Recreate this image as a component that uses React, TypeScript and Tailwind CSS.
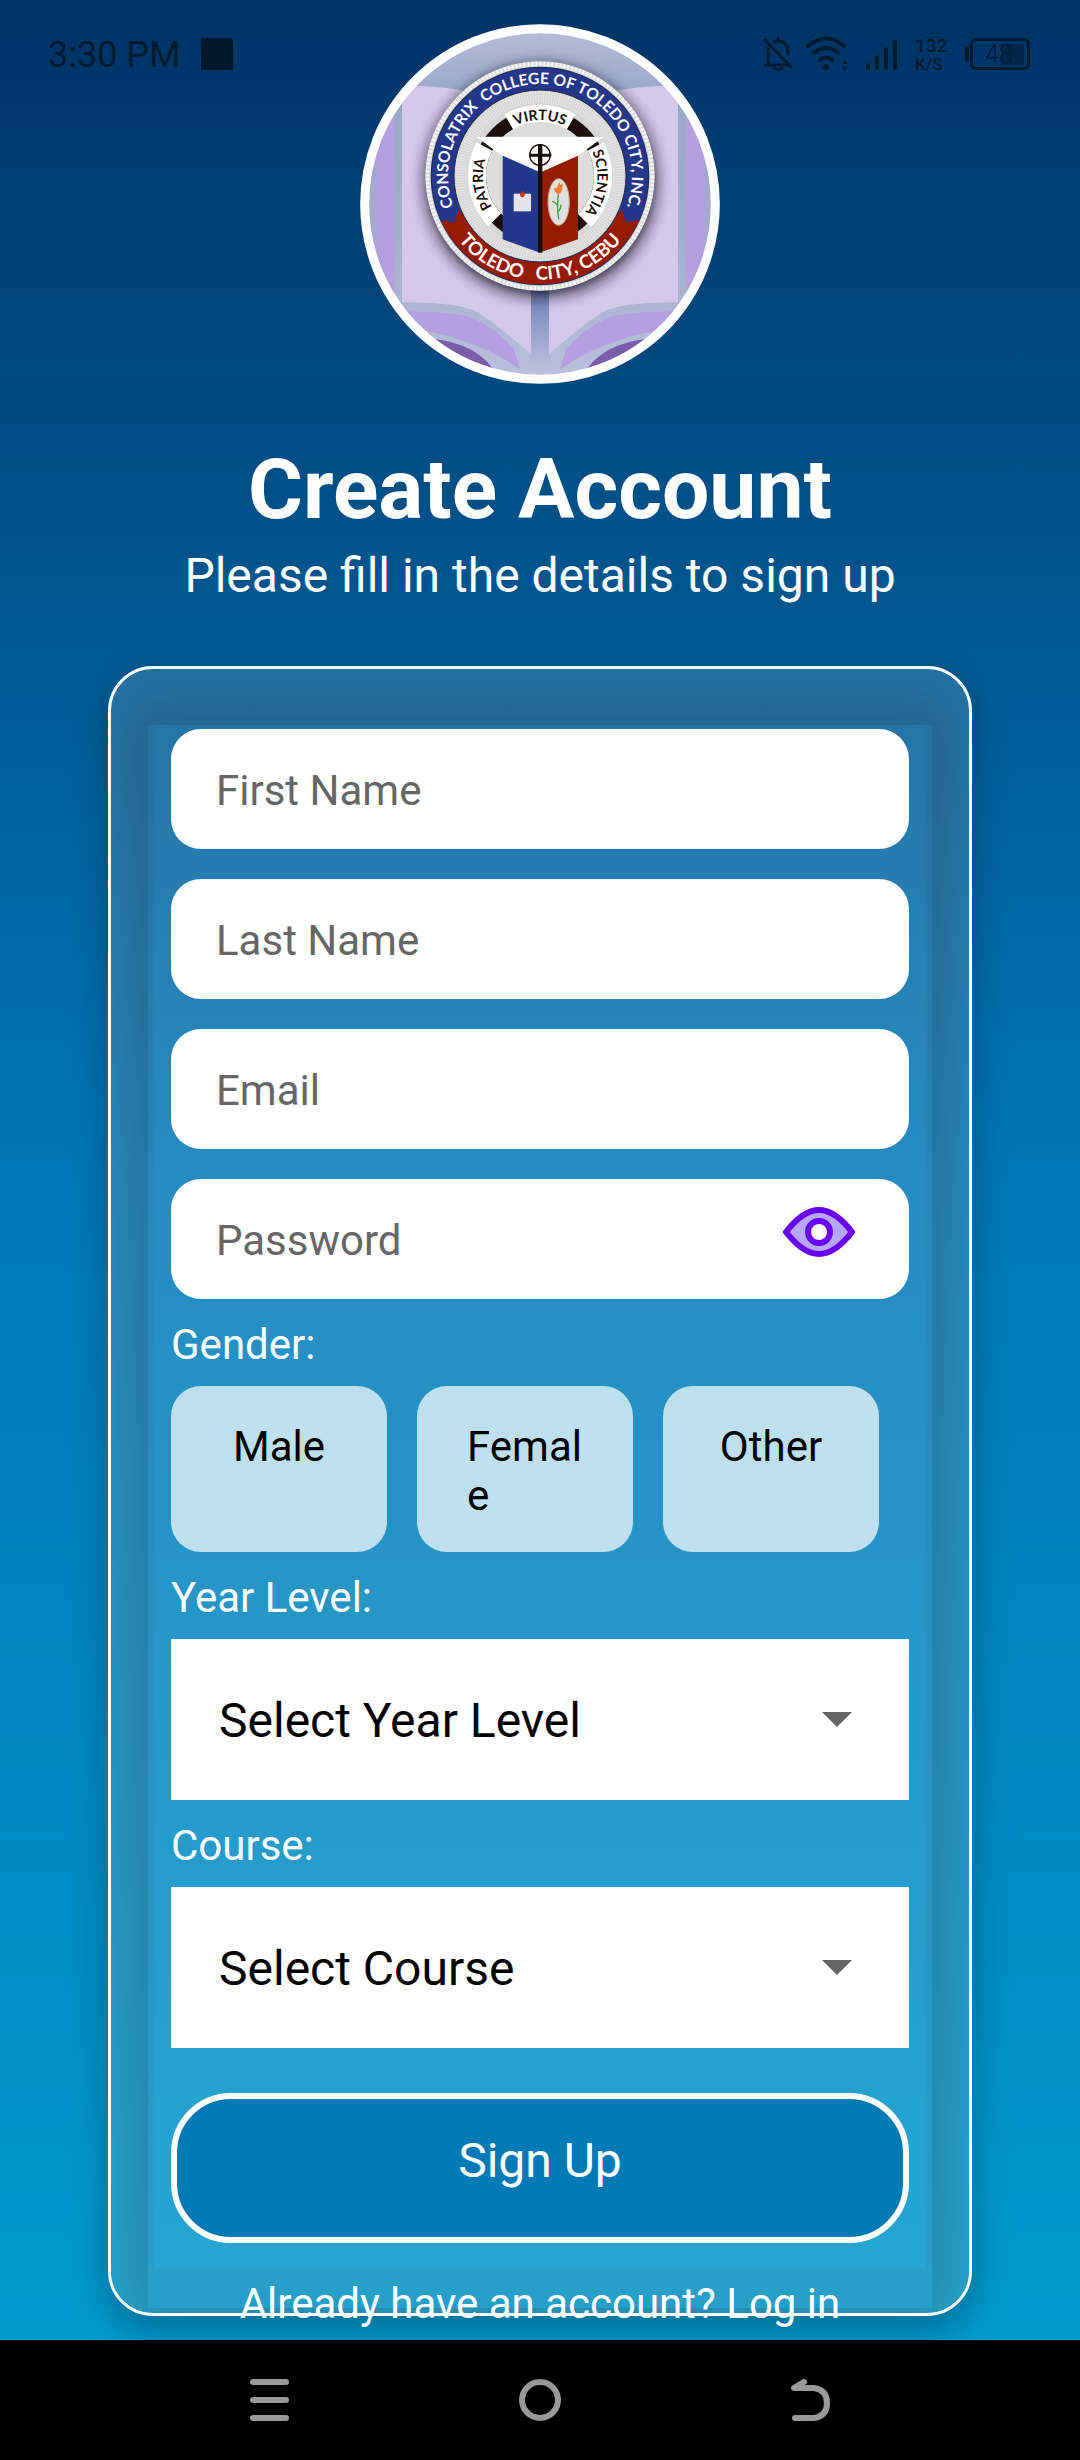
import { useState } from "react";

const polar = (r: number, deg: number) => {
  const a = (deg * Math.PI) / 180;
  return `${(600 + r * Math.cos(a)).toFixed(1)} ${(498 + r * Math.sin(a)).toFixed(1)}`;
};

// Clockwise arc around the seal's centre; angles in degrees, y axis down.
const arc = (r: number, from: number, to: number) =>
  `M${polar(r, from)} A${r} ${r} 0 ${to - from > 180 ? 1 : 0} 1 ${polar(r, to)}`;

const arcBack = (r: number, from: number, to: number) =>
  `M${polar(r, from)} A${r} ${r} 0 0 0 ${polar(r, to)}`;

function Page() {
  return (
    <g>
      <path d="M186 228 Q280 222 420 250 L573 600 V1033 Q450 925 400 900 Q330 876 186 877 Z" fill="#d3c7ea" />
      <path d="M105 260 H163 V900 H105 Z" fill="#b49fdf" />
      <path d="M186 905 Q330 902 400 925 Q480 965 522 1018 L541 1080 Q420 985 186 950 Z" fill="#b49fdf" />
      <path d="M230 985 Q390 985 457 1074 L400 1120 H260 Z" fill="#7a5cab" />
    </g>
  );
}

function Seal() {
  return (
    <svg viewBox="60 42 1080 1080" className="size-[360px]" role="img" aria-label="Consolatrix College of Toledo City seal">
      <defs>
        <clipPath id="disc"><circle cx="600" cy="582" r="520" /></clipPath>
        <linearGradient id="sky" x1="0" y1="0" x2="0" y2="1">
          <stop offset="0" stopColor="#b9bedb" />
          <stop offset="0.2" stopColor="#98a8c8" />
          <stop offset="0.6" stopColor="#a3adcd" />
          <stop offset="1" stopColor="#bcc0de" />
        </linearGradient>
        <linearGradient id="gap" x1="0" y1="0" x2="0" y2="1">
          <stop offset="0" stopColor="#6f7fb8" />
          <stop offset="1" stopColor="#6f7fb8" stopOpacity="0" />
        </linearGradient>
        <filter id="soft" x="-20%" y="-20%" width="140%" height="140%"><feGaussianBlur stdDeviation="22" /></filter>
        <path id="arcTop" d={arc(276, 150, 390)} />
        <path id="arcBottom" d={arcBack(311, 155, 25)} />
        <path id="arcVirtus" d={arc(168, 215, 325)} />
        <path id="arcPatria" d={arc(171, 117, 227)} />
        <path id="arcScientia" d={arc(172, -56, 70)} />
      </defs>
      <g clipPath="url(#disc)">
        <rect x="60" y="42" width="1080" height="1080" fill="url(#sky)" />
        <rect x="570" y="830" width="60" height="230" fill="url(#gap)" />
        <Page />
        <g transform="translate(1200 0) scale(-1 1)"><Page /></g>
      </g>
      <circle cx="600" cy="582" r="526" fill="none" stroke="#fff" strokeWidth="27" />
      <circle cx="602" cy="512" r="346" fill="#141428" opacity="0.9" filter="url(#soft)" />
      <circle cx="600" cy="498" r="344" fill="#d8d8d8" />
      <circle cx="600" cy="498" r="337" fill="none" stroke="#f4f4f4" strokeWidth="12" strokeDasharray="8 4" />
      <circle cx="600" cy="498" r="328" fill="#1d2a55" />
      <circle cx="600" cy="498" r="292" fill="none" stroke="#25378a" strokeWidth="66" />
      <path d={arcBack(292, 155, 25)} fill="none" stroke="#961b00" strokeWidth="66" />
      <path d="M300 625 L343 640 L356 598 L320 570 L285 580 Z" fill="#25378a" />
      <path d="M356 598 L343 640 L302 634 L330 680 L374 630 Z" fill="#961b00" />
      <path d="M900 628 L858 638 L845 598 L880 570 L915 580 Z" fill="#25378a" />
      <path d="M845 598 L858 638 L898 630 L872 680 L828 630 Z" fill="#961b00" />
      <circle cx="600" cy="498" r="258" fill="#d6d6d6" stroke="#20264a" strokeWidth="3" />
      <circle cx="600" cy="498" r="236" fill="none" stroke="#e6e6e6" strokeWidth="36" strokeDasharray="3 5" />
      <circle cx="600" cy="498" r="180" fill="none" stroke="#1a0f08" strokeWidth="42" />
      <g fill="none" stroke="#fff" strokeWidth="54">
        <path d={arc(187, 240, 300)} />
        <path d={arc(189, 136, 208)} />
        <path d={arc(189, -28, 45)} />
      </g>
      <circle cx="600" cy="498" r="162" fill="#dcdcdc" />
      <path d="M408 380 H792 L712 438 L602 485 L488 438 Z" fill="#fff" />
      <path d="M488 437 L596 485 V727 L488 688 Z" fill="#25378a" />
      <path d="M606 485 L714 437 V688 L606 725 Z" fill="#961b00" />
      <path d="M594 402 H607 V728 H594 Z M568 431 H634 V440 H568 Z" fill="#1a0f08" />
      <circle cx="600" cy="435" r="31" fill="none" stroke="#1a0f08" strokeWidth="4" />
      <rect x="521" y="551" width="52" height="53" fill="#e4e4ea" />
      <path d="M539 548 q5 4 8 -5 q12 8 6 15 q-6 8 -12 0 Z" fill="#c63a20" />
      <ellipse cx="656" cy="576" rx="32" ry="70" fill="#e2e0dc" stroke="#b9a58c" strokeWidth="3" />
      <path d="M643 534 L650 534 L658 516 L661 526 L668 520 Q668 550 655 553 Q642 548 643 534 Z" fill="#f47a35" />
      <path d="M655 553 Q650 590 656 628 M654 590 Q648 576 636 574 M655 604 Q664 596 662 584" fill="none" stroke="#3d9a3d" strokeWidth="4" />
      <g fontFamily="Lato, sans-serif" textAnchor="middle">
        <text fontSize="47" fontWeight="700" fill="#fff" xmlSpace="preserve">
          <textPath href="#arcTop" startOffset="50%">CONSOLATRIX  COLLEGE OF TOLEDO CITY, INC.</textPath>
        </text>
        <text fontSize="56" fontWeight="700" fill="#fff" xmlSpace="preserve">
          <textPath href="#arcBottom" startOffset="50%">TOLEDO   CITY, CEBU</textPath>
        </text>
        <g fontSize="43" fontWeight="700" fill="#1a0f08">
          <text><textPath href="#arcVirtus" startOffset="50%">VIRTUS</textPath></text>
          <text><textPath href="#arcPatria" startOffset="50%">PATRIA</textPath></text>
          <text><textPath href="#arcScientia" startOffset="50%">SCIENTIA</textPath></text>
        </g>
      </g>
    </svg>
  );
}

function StatusIcons() {
  return (
    <div className="flex h-[60px] items-center justify-end gap-3 text-[#001a30]">
      <svg viewBox="0 0 30 36" className="h-9 w-[30px]" fill="none" stroke="currentColor" strokeWidth="3" strokeLinecap="round" strokeLinejoin="round">
        <path d="M5 12 V28 M2 29 H24 M11 6 Q14 4 18 5 Q25 8 25 15 V18" />
        <path d="M2 4 L28 31" />
        <path d="M15 2 V4 M11 32 Q15 36 19 32" />
      </svg>
      <svg viewBox="0 0 44 36" className="h-9 w-11" fill="none" stroke="currentColor" strokeWidth="4" strokeLinecap="round">
        <path d="M3 10 Q21 -5 39 10 M9 17 Q21 7 33 17 M15 24 Q21 19 27 24" />
        <circle cx="21" cy="31" r="3" fill="currentColor" stroke="none" />
        <path d="M37 28 L40 24 L43 28 Z M37 31 H43 L40 35 Z" fill="currentColor" stroke="none" />
      </svg>
      <svg viewBox="0 0 34 34" className="mx-1 size-[34px]" fill="none" stroke="currentColor" strokeWidth="4" strokeLinecap="round">
        <path d="M3 28 V31 M12 20 V31 M21 12 V31 M30 4 V31" />
      </svg>
      <p className="w-[38px] text-[19px] leading-[21px] font-medium">
        132
        <span className="block text-[17px] leading-[17px]">K/S</span>
      </p>
      <div className="flex items-center pr-0.5">
        <span className="h-4 w-1 rounded-l bg-current" />
        <span className="ml-px flex h-8 w-[60px] items-center rounded-md border-[3px] border-current bg-[linear-gradient(#00264a,#00264a)] bg-[length:23px_21px] bg-[position:28px_center] bg-no-repeat pl-3 text-[25px] leading-none font-light">
          48
        </span>
      </div>
    </div>
  );
}

function Field({ id, label, type = "text" }: { id: string; label: string; type?: string }) {
  return (
    <input
      id={id}
      type={type}
      aria-label={label}
      placeholder={label}
      className="h-[120px] w-full rounded-[30px] bg-white px-[45px] pt-[3px] text-[42px] text-black outline-none placeholder:text-[#666]"
    />
  );
}

function Picker({ id, label, prompt, options }: { id: string; label: string; prompt: string; options: string[] }) {
  return (
    <div>
      <label htmlFor={id} className="block pt-[17px] pb-[13px] text-[42px] leading-[57px] text-white">{label}</label>
      <div className="grid items-center">
        <select
          id={id}
          defaultValue=""
          className="col-start-1 row-start-1 h-[161px] w-full appearance-none bg-white pt-[3px] pr-[100px] pl-12 text-[48px] text-black outline-none"
        >
          <option value="">{prompt}</option>
          {options.map((o) => <option key={o}>{o}</option>)}
        </select>
        <svg viewBox="0 0 30 15" className="pointer-events-none col-start-1 row-start-1 mr-[57px] h-[15px] w-[30px] justify-self-end" fill="#666">
          <path d="M0 0 H30 L15 15 Z" />
        </svg>
      </div>
    </div>
  );
}

export default function App() {
  const [visible, setVisible] = useState(false);
  const [gender, setGender] = useState("");

  return (
    <div className="flex min-h-screen flex-col font-[Roboto,sans-serif]">
      <main className="grow bg-linear-to-b/srgb from-[#003366] via-[#0077b6] to-[#0099cc] pb-6">
        <header className="grid grid-cols-[1fr_auto_1fr] items-start px-12 pt-6">
          <div className="flex h-[60px] items-center gap-5 text-[36px] text-[#001a30]">
            <time className="pt-0.5">3:30 PM</time>
            <span className="size-8 bg-[#00172a]" />
          </div>
          <Seal />
          <StatusIcons />
        </header>

        <h1 className="mt-14 text-center text-[84px] leading-[100px] font-bold text-white">Create Account</h1>
        <p className="mt-2 text-center text-[48px] leading-[56px] text-white">Please fill in the details to sign up</p>

        <form
          onSubmit={(e) => e.preventDefault()}
          className="relative mx-[10%] mt-[62px] rounded-[45px] border-[3px] border-white bg-white/15 bg-clip-padding px-[60px] pt-[60px] shadow-[0_14px_36px_rgba(0,0,0,0.28)]"
        >
          <div aria-hidden="true" className="pointer-events-none absolute inset-0 overflow-hidden rounded-[42px]">
            <div className="absolute inset-x-[37px] top-14 bottom-[5px] border-x-[6px] border-b-[39px] border-[#262626]/5 shadow-[0_0_50px_18px_rgba(38,38,38,0.26)]" />
          </div>

          <div className="relative">
            <div className="flex flex-col gap-[30px]">
              <Field id="first" label="First Name" />
              <Field id="last" label="Last Name" />
              <Field id="email" label="Email" type="email" />
              <div className="grid items-center">
                <div className="col-start-1 row-start-1">
                  <Field id="password" label="Password" type={visible ? "text" : "password"} />
                </div>
                <button
                  type="button"
                  aria-label="Show password"
                  onClick={() => setVisible(!visible)}
                  className="col-start-1 row-start-1 mr-[54px] mb-[14px] justify-self-end"
                >
                  <svg viewBox="0 0 72 50" className="block h-[50px] w-[72px]" fill="none" stroke="#6a00f4" strokeWidth="6" strokeLinejoin="round">
                    <path d="M3 25 Q20 3 36 3 Q52 3 69 25 Q52 47 36 47 Q20 47 3 25 Z" fill="#b8a7ff" />
                    <circle cx="36" cy="25" r="11" fill="#fff" />
                  </svg>
                </button>
              </div>
            </div>

            <p id="gender" className="pt-[17px] pb-[13px] text-[42px] leading-[57px] text-white">Gender:</p>
            <div role="group" aria-labelledby="gender" className="mr-[30px] grid grid-cols-3 gap-[30px]">
              {["Male", "Female", "Other"].map((g) => (
                <button
                  key={g}
                  type="button"
                  aria-pressed={gender === g}
                  onClick={() => setGender(g)}
                  className="flex flex-col items-center rounded-[30px] bg-[#bedfee] px-[50px] pt-9 pb-8 text-left text-[42px] leading-[49px] text-black"
                >
                  <span className="break-all">{g}</span>
                </button>
              ))}
            </div>

            <Picker id="year" label="Year Level:" prompt="Select Year Level" options={["1st Year", "2nd Year", "3rd Year", "4th Year"]} />
            <Picker id="course" label="Course:" prompt="Select Course" options={["BSIT", "BSED", "BSBA"]} />

            <button
              type="submit"
              className="mt-[45px] block h-[150px] w-full rounded-[60px] border-[6px] border-white bg-[#007ab6] pb-[14px] text-[48px] leading-[56px] text-white"
            >
              Sign Up
            </button>
            <a href="#login" className="mt-9 -mb-[15px] block text-center text-[42px] leading-[49px] text-white">
              Already have an account? Log in
            </a>
          </div>
        </form>
      </main>

      <nav className="relative grid h-[120px] grid-cols-3 place-items-center bg-black px-[12.5%]">
        <button type="button" aria-label="Recent apps">
          <svg viewBox="0 0 42 42" className="size-[42px]" fill="none" stroke="#999" strokeWidth="6" strokeLinecap="round">
            <path d="M4 3 H37 M4 21 H37 M4 39 H37" />
          </svg>
        </button>
        <button type="button" aria-label="Home">
          <svg viewBox="0 0 42 42" className="size-[42px]" fill="none" stroke="#999" strokeWidth="6">
            <circle cx="21" cy="21" r="18" />
          </svg>
        </button>
        <button type="button" aria-label="Back">
          <svg viewBox="0 0 42 42" className="size-[42px]" fill="none" stroke="#999" strokeWidth="6" strokeLinecap="round" strokeLinejoin="round">
            <path d="M15 3 L5 9 H25 Q38 11 38 24 Q38 37 25 39 H6" />
          </svg>
        </button>
      </nav>
    </div>
  );
}
